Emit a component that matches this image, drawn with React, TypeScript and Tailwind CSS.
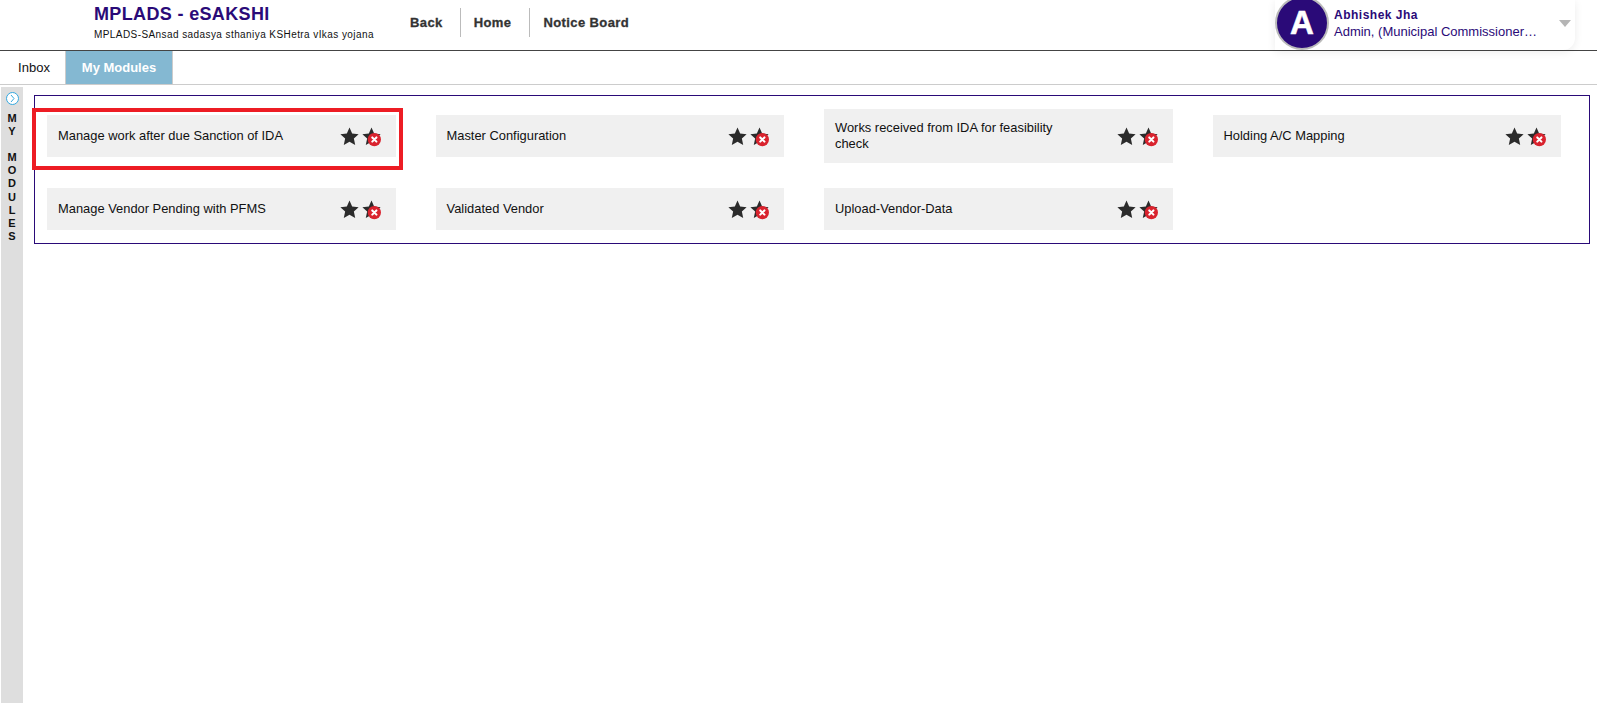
const modules = [
  'Manage work after due Sanction of IDA',
  'Master Configuration',
  'Works received from IDA for feasibility check',
  'Holding A/C Mapping',
  'Manage Vendor Pending with PFMS',
  'Validated Vendor',
  'Upload-Vendor-Data',
];

const starPath = 'M10 0.6l2.8 6.2 6.8 0.7-5 4.6 1.4 6.8-6-3.5-6 3.5 1.4-6.8-5-4.6 6.8-0.7z';

function Star() {
  return (
    <svg width="19" height="19" viewBox="0 0 20 20" className="block">
      <path d={starPath} fill="#2b2b2b" />
    </svg>
  );
}

function RemoveStar() {
  return (
    <svg width="19" height="19" viewBox="0 0 20 20" className="block overflow-visible">
      <path d={starPath} fill="#2b2b2b" />
      <circle cx="13" cy="13.2" r="7" fill="#d9232e" />
      <path d="M10.8 11l4.4 4.4M15.2 11l-4.4 4.4" stroke="#fff" strokeWidth="2.2" strokeLinecap="round" />
    </svg>
  );
}

function ModuleCard({ title, marked }: { title: string; marked: boolean }) {
  return (
    <div className="flex items-center pl-[12px] pr-[28px] h-[54px]">
      <div className="relative flex items-center w-full min-h-[42px] bg-[#f0f0f0] py-[11px] pl-[11px] pr-[15px]">
        <div className="flex-1 pr-[38px] text-[12.9px] leading-[16px] text-[#111]">{title}</div>
        <div className="flex items-center gap-[3px] shrink-0">
          <Star />
          <RemoveStar />
        </div>
        {marked && <div className="absolute left-[-15px] right-[-7px] top-[-7px] bottom-[-13px] border-[4px] border-[#ed1c24]" />}
      </div>
    </div>
  );
}

export default function App() {
  return (
    <div className="min-h-[703px] bg-white font-['Liberation_Sans',Arial,sans-serif] overflow-hidden">
      {/* Header */}
      <div className="flex items-center h-[51px] border-b-[1px] border-[#444] pl-[94px]">
        <div className="w-[316px] pb-[3px]">
          <div className="text-[18px] leading-[22px] font-bold text-[#2a0a78] -mt-[3px] tracking-[0.35px]">MPLADS - eSAKSHI</div>
          <div className="text-[10px] leading-[12px] mt-[4px] text-[#111] tracking-[0.42px]">MPLADS-SAnsad sadasya sthaniya KSHetra vIkas yojana</div>
        </div>
        <div className="flex items-center text-[13px] font-bold text-[#333] tracking-[0.4px] pb-[5px] [-webkit-text-stroke:0.3px_#333]">
          <span className="pr-[17px]">Back</span>
          <span className="border-l border-[#bbb] h-[29px] flex items-center pl-[13px] pr-[18px]">Home</span>
          <span className="border-l border-[#bbb] h-[29px] flex items-center pl-[13px]">Notice Board</span>
        </div>
        <div className="ml-auto relative flex items-center w-[300px] h-[50px] mr-[22px] rounded-br-[12px] shadow-[0_2px_8px_rgba(0,0,0,0.08)]">
          <div className="w-[54px] h-[54px] -mt-[5px] shrink-0 rounded-full bg-[#2a0a78] border-[2px] border-[#bbb] flex items-center justify-center text-white text-[33px] leading-none font-bold [-webkit-text-stroke:0.6px_#fff]">A</div>
          <div className="ml-[5px] w-[204px] -mt-[2px]">
            <div className="text-[12px] leading-[16px] font-bold text-[#2a0a78] tracking-[0.5px]">Abhishek Jha</div>
            <div className="text-[13px] leading-[18px] text-[#2a0a78] whitespace-nowrap">Admin, (Municipal Commissioner…</div>
          </div>
          <div className="absolute right-[4px] top-[20px] w-0 h-0 border-l-[6px] border-r-[6px] border-t-[7px] border-l-transparent border-r-transparent border-t-[#b5b5b5]" />
        </div>
      </div>

      {/* Tabs */}
      <div className="flex h-[34px] border-b-[1px] border-[#ccc]">
        <div className="w-[65px] pl-[3px] flex items-center justify-center text-[13px] text-[#111]">Inbox</div>
        <div className="w-[108px] flex items-center justify-center text-[13px] font-bold text-white bg-[#84b8d2] border-x border-[#ccc]">My Modules</div>
      </div>

      <div className="flex h-[618px] mt-[2px]">
        {/* Side rail */}
        <div className="ml-[1px] w-[22px] shrink-0 bg-[#dedede] flex flex-col items-center pt-[5px]">
          <div className="w-[13px] h-[13px] rounded-full border border-[#35a8df] bg-white flex items-center justify-center">
            <svg width="7" height="9" viewBox="0 0 7 9"><path d="M2 1l3 3.5L2 8" fill="none" stroke="#35a8df" strokeWidth="1" /></svg>
          </div>
          <div className="mt-[7px] text-[11px] leading-[13.1px] font-bold text-[#111] text-center">
            {'MY'.split('').map((c, i) => <div key={i}>{c}</div>)}
            <div className="h-[13.1px]" />
            {'MODULES'.split('').map((c, i) => <div key={i}>{c}</div>)}
          </div>
        </div>

        {/* Modules panel */}
        <div className="ml-[11px] mr-[7px] mt-[8px] flex-1 self-start border border-[#2a0a78] pt-[13px] pb-[7px] grid grid-cols-4 gap-y-[19px]">
          {modules.map((m, i) => (
            <ModuleCard key={m} title={m} marked={i === 0} />
          ))}
        </div>
      </div>
    </div>
  );
}
